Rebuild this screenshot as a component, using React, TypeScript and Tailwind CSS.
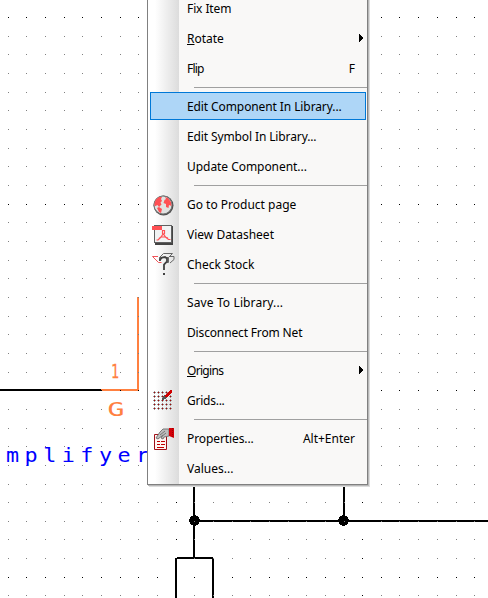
import React from "react";

const gridX = [8, 26, 45, 64, 82, 101, 120, 138, 157, 176, 194, 213, 232, 250, 269, 288, 306, 325, 344, 362, 381, 399, 418, 437, 456, 474];
const gridY = [17, 36, 54, 73, 92, 110, 129, 148, 166, 185, 204, 222, 241, 260, 278, 297, 316, 334, 353, 372, 390, 409, 428, 446, 465, 484, 502, 521, 539, 558, 577, 595];
const majorX = [176, 362];
const majorY = [17, 204, 390, 577];

function Schematic() {
  return (
    <svg className="absolute inset-0" width="488" height="598" shapeRendering="crispEdges">
      <g fill="#000">
        <rect x="0" y="389" width="101" height="2" />
        <rect x="193" y="480" width="2" height="78" />
        <rect x="343" y="480" width="2" height="40" />
        <rect x="195" y="520" width="293" height="2" />
        <rect x="177" y="557" width="36" height="2" />
        <rect x="175" y="558" width="2" height="40" />
        <rect x="212" y="558" width="2" height="40" />
        <circle cx="194.5" cy="520.5" r="5.3" />
        <circle cx="343.5" cy="520.5" r="5.3" />
      </g>
      <rect x="101" y="389" width="38" height="2" fill="#ff8040" />
      <rect x="137" y="297" width="2" height="94" fill="#ff8040" />
      {gridY.map((y) =>
        gridX.map((x) => (
          <rect key={`${x}-${y}`} x={x} y={y} width="1" height="1" fill={majorX.includes(x) || majorY.includes(y) ? "#000" : "#808080"} />
        ))
      )}
      <g style={{ fontFamily: '"DejaVu Sans Mono", monospace' }} strokeWidth="0.3">
        <text x="111" y="378" fontSize="20" fill="#ff8040" stroke="#ff8040" textLength="8" lengthAdjust="spacingAndGlyphs">1</text>
        <text x="107.500" y="415.500" fontSize="20" fill="#ff8040" textLength="17" lengthAdjust="spacingAndGlyphs">G</text>
        <text x="0" y="0" fontSize="19" fill="#0000ff" letterSpacing="4.8" transform="translate(6 462) scale(1.145 1)">mplifyer</text>
      </g>
    </svg>
  );
}

function GlobeIcon() {
  return (
    <svg width="24" height="24" viewBox="0 0 24 24">
      <circle cx="12.500" cy="12.500" r="10" fill="#505050" />
      <circle cx="12" cy="12" r="9" fill="#e0e2e2" stroke="#777" />
      <path d="M5 6.500l3-2.500h3l-1 2 1 2-1.500 1.500 1 2-2.500 2.500-1.500-2-2 1H3.500v-3zM6 15l2-1 3 2-1 4-2-1zM14 4l3 1 3 4 .5 4-2.500-1-.5 3-2.500-1v-3l-2.500-1 1-3 1.500-1z" fill="#ff5054" />
    </svg>
  );
}

function PdfIcon() {
  return (
    <svg width="24" height="24" viewBox="0 0 24 24" shapeRendering="crispEdges">
      <path d="M4 3h18v19H4z" fill="#444" />
      <path d="M3 2h18v18H3z" fill="#606060" />
      <path d="M4 3h16v16H4z" fill="#f1f2f3" />
      <path d="M1 3h10v4H1z" fill="#ff5054" />
      <path d="M11.500 7.500h2v3l-1 1-1-1zM12 11l-2 3-3 3H5.500M12.500 11l2 3 3 2.500h2M8 15.500l2-1.500h4l3 1" fill="none" stroke="#ff5054" strokeWidth="1.200" shapeRendering="auto" />
    </svg>
  );
}

function StockIcon() {
  return (
    <svg width="24" height="24" viewBox="0 0 24 24" fill="none">
      <path d="M7 3.500H1.500l6 6h3" stroke="#f0555a" />
      <path d="M8.500 4.500l4-4h9l-4 4h-9M8.500 4.500v3M17.500 4.500v5h-3M19 3.500h4v3l-4 3.500" stroke="#666" />
      <path d="M9 8V6.500l2-2 3-.5 2 1.500v3l-3 3v5.500" stroke="#404040" strokeWidth="1.800" />
      <path d="M12 20h2v2h-2z" fill="#404040" />
    </svg>
  );
}

function GridsIcon() {
  const steps = [2, 6, 10, 14, 18];
  return (
    <svg width="24" height="24" viewBox="0 0 24 24" shapeRendering="crispEdges">
      {steps.map((y) =>
        steps.map((x) => (
          <g key={`${x}-${y}`}>
            <path d={`M${x} ${y + 1}h3v1h-3zM${x + 1} ${y}h1v3h-1z`} fill="#999" />
            <path d={`M${x + 1} ${y + 1}h1v1h-1z`} fill="#b00000" />
          </g>
        ))
      )}
      <path d="M11 11l1-4 2-1 2 2-2 2z" fill="#555" />
      <path d="M14 6l5-5h2v3l-5 4h-2z" fill="#d00000" />
    </svg>
  );
}

function PropertiesIcon() {
  return (
    <svg width="24" height="24" viewBox="0 0 24 24">
      <path d="M3.500 7.500h12v15h-12z" fill="#fff5f2" stroke="#a01018" />
      <path d="M6 14.500h3m1 0h4M6 17.500h3m1 0h4M6 20.500h7" stroke="#c00000" />
      <path d="M5 11l4-6 3-3h6v7l-5 1-1 2-2-1 2-3-5 4z" fill="#bdbdbd" stroke="#777" />
      <path d="M9 8l5-4m-4 6l5-4" stroke="#777" />
      <path d="M18 1h5v10l-5-2z" fill="#d40008" />
      <path d="M21.500 1v9" stroke="#a00000" strokeDasharray="1 1" />
    </svg>
  );
}

interface ItemProps {
  label: React.ReactNode;
  shortcut?: string;
  submenu?: boolean;
  active?: boolean;
  icon?: React.ReactNode;
  tracking?: string;
}

function Item({ label, shortcut, submenu, active, icon, tracking = "" }: ItemProps) {
  return (
    <div className="flex h-[30px] shrink-0 items-center pl-[2px] pr-[1px]">
      <div className={`flex h-7 w-full items-center border pt-[2px] ${active ? "border-[#0078d7] bg-[#aed6f7]" : "border-transparent"}`}>
        <div className="flex h-6 w-9 shrink-0 items-center">{icon}</div>
        <span className={`grow whitespace-nowrap ${tracking}`}>{label}</span>
        {shortcut && <span className="pr-[10px]">{shortcut}</span>}
        {submenu && (
          <svg className="mb-[2px] mr-[2px]" width="4" height="8" viewBox="0 0 4 8" shapeRendering="crispEdges">
            <path d="M0 0l4 4-4 4z" />
          </svg>
        )}
      </div>
    </div>
  );
}

function Separator() {
  return (
    <div className="flex h-2 shrink-0 items-center pl-[46px]">
      <div className="h-px w-full bg-[#a0a0a0]" />
    </div>
  );
}

function Menu() {
  return (
    <div className="absolute left-[147px] top-[-8px] flex w-[221px] flex-col border border-[#808080] bg-[linear-gradient(to_right,#fff_0px,#fff_7px,#dcdcdc_31px,#f9f8f7_31px)] pb-px font-['Noto_Sans',sans-serif] text-[12px] leading-4 text-black shadow-[1px_1px_0_#b8b8b8,2px_2px_0_#dcdcdc]">
      <Item label="Fix Item" tracking="tracking-[-0.1px]" />
      <Item label={<><u>R</u>otate</>} submenu />
      <Item label="Flip" shortcut="F" tracking="tracking-[-0.8px]" />
      <Separator />
      <Item label="Edit Component In Library..." active tracking="tracking-[-0.1px]" />
      <Item label="Edit Symbol In Library..." tracking="tracking-[-0.12px]" />
      <Item label="Update Component..." tracking="tracking-[-0.05px]" />
      <Separator />
      <Item label="Go to Product page" icon={<GlobeIcon />} />
      <Item label="View Datasheet" icon={<PdfIcon />} />
      <Item label="Check Stock" icon={<StockIcon />} />
      <Separator />
      <Item label="Save To Library..." tracking="tracking-[0.12px]" />
      <Item label="Disconnect From Net" tracking="tracking-[-0.15px]" />
      <Separator />
      <Item label={<><u>O</u>rigins</>} submenu tracking="tracking-[-0.7px]" />
      <Item label="Grids..." icon={<GridsIcon />} tracking="tracking-[-0.25px]" />
      <Separator />
      <Item label="Properties..." shortcut="Alt+Enter" icon={<PropertiesIcon />} tracking="tracking-[-0.1px]" />
      <Item label="Values..." />
    </div>
  );
}

export default function App() {
  return (
    <main className="relative h-[598px] w-[488px] overflow-hidden bg-white">
      <Schematic />
      <Menu />
    </main>
  );
}
